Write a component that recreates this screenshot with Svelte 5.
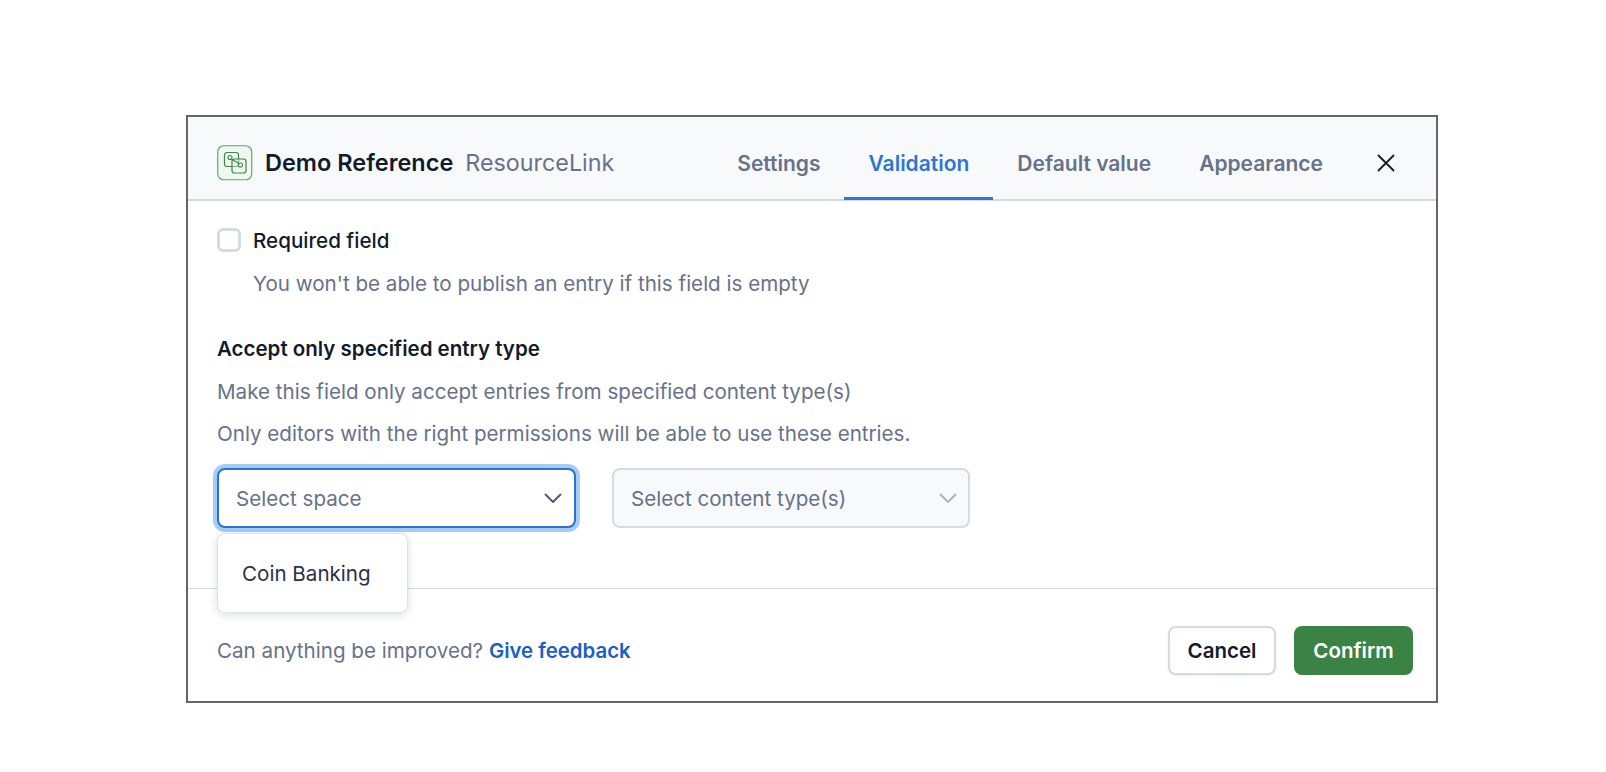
<script lang="ts">
  const tabs = ["Settings", "Validation", "Default value", "Appearance"];
  let active = $state("Validation");
</script>

<div class="page">
  <div class="modal">
    <header class="head">
      <div class="title">
        <svg class="field-icon" width="36" height="36" viewBox="0 0 36 36" fill="none">
          <rect x="0.75" y="0.75" width="34" height="34" rx="6" stroke="#5fa86e" stroke-width="1.2" fill="#f0f7f1" />
          <rect x="7.5" y="7.5" width="14" height="14" rx="2.5" stroke="#3d8748" stroke-width="1.2" />
          <rect x="15" y="14" width="14" height="14" rx="2.5" stroke="#3d8748" stroke-width="1.2" fill="#f0f7f1" fill-opacity="0.4" />
          <circle cx="13" cy="12.5" r="2" stroke="#3d8748" stroke-width="1.1" fill="#f7f9fa" />
          <circle cx="23.5" cy="20" r="2" stroke="#3d8748" stroke-width="1.1" fill="#f7f9fa" />
          <path d="M14.5 14l7.5 4.5" stroke="#3d8748" stroke-width="1.1" />
        </svg>
        <span class="name">Demo Reference</span>
        <span class="kind">ResourceLink</span>
      </div>
      <nav class="tabs">
        {#each tabs as tab (tab)}
          <button class="tab" class:active={tab === active} onclick={() => (active = tab)}>{tab}</button>
        {/each}
      </nav>
      <button class="close" aria-label="Close">
        <svg width="22" height="22" viewBox="0 0 22 22" fill="none">
          <path d="M3.5 3.5l15 15M18.5 3.5l-15 15" stroke="#111b2b" stroke-width="1.8" stroke-linecap="round" />
        </svg>
      </button>
    </header>

    <main class="body">
      <label class="check">
        <span class="box"></span>
        <span class="check-label">Required field</span>
      </label>
      <p class="hint indented">You won't be able to publish an entry if this field is empty</p>

      <h3 class="section">Accept only specified entry type</h3>
      <p class="hint first">Make this field only accept entries from specified content type(s)</p>
      <p class="hint second">Only editors with the right permissions will be able to use these entries.</p>

      <div class="selects">
        <div class="select-wrap">
          <div class="select focused">
            <span>Select space</span>
            <svg width="22" height="22" viewBox="0 0 22 22" fill="none">
              <path d="M3.5 7.5L11 15l7.5-7.5" stroke="#4f5a6e" stroke-width="1.9" stroke-linecap="round" stroke-linejoin="round" />
            </svg>
          </div>
          <div class="menu">Coin Banking</div>
        </div>
        <div class="select disabled">
          <span>Select content type(s)</span>
          <svg width="22" height="22" viewBox="0 0 22 22" fill="none">
            <path d="M3.5 7.5L11 15l7.5-7.5" stroke="#a9b2c0" stroke-width="1.9" stroke-linecap="round" stroke-linejoin="round" />
          </svg>
        </div>
      </div>
    </main>

    <footer class="foot">
      <p class="feedback">Can anything be improved? <a href="#feedback">Give feedback</a></p>
      <div class="actions">
        <button class="btn cancel">Cancel</button>
        <button class="btn confirm">Confirm</button>
      </div>
    </footer>
  </div>
</div>

<style>
  :global(body) {
    margin: 0;
    background: #fff;
    font-family: Inter, "Liberation Sans", sans-serif;
  }

  .page {
    padding: 115px 0 0 186px;
  }

  .modal {
    box-sizing: border-box;
    width: 1252px;
    height: 588px;
    border: 2px solid #666;
    background: #fff;
    display: flex;
    flex-direction: column;
  }

  .head {
    display: flex;
    align-items: stretch;
    height: 84px;
    box-sizing: border-box;
    background: #f7f9fa;
    border-bottom: 2px solid #d3dce0;
    padding-left: 29px;
  }

  .title {
    display: flex;
    align-items: center;
    flex: 1;
    padding-top: 9px;
  }

  .field-icon {
    margin-right: 12px;
  }

  .name {
    font-size: 23.5px;
    font-weight: 600;
    color: #111b2b;
  }

  .kind {
    font-size: 23.3px;
    color: #67728a;
    margin-left: 12px;
  }

  .tabs {
    display: flex;
    margin-right: 27px;
  }

  .tab {
    border: none;
    background: transparent;
    font-family: inherit;
    font-size: 21px;
    font-weight: 600;
    color: #67728a;
    padding: 12px 24px 0;
    border-bottom: 3px solid transparent;
    margin-bottom: -1px;
    cursor: pointer;
  }

  .tab.active {
    color: #2e75d4;
    border-bottom-color: #2e75d4;
  }

  .close {
    border: none;
    background: transparent;
    padding: 10px 0 0;
    margin-right: 38px;
    width: 24px;
    display: flex;
    align-items: center;
    justify-content: center;
    cursor: pointer;
  }

  .body {
    flex: 1;
    padding: 26px 29px 0;
    min-height: 0;
  }

  .check {
    display: flex;
    align-items: center;
    gap: 12px;
    height: 26px;
    font-size: 20.6px;
  }

  .box {
    box-sizing: border-box;
    width: 24px;
    height: 24px;
    border: 3px solid #d3dce3;
    border-radius: 6px;
    background: #fff;
  }

  .check-label {
    font-weight: 500;
    color: #111b2b;
  }

  .hint {
    margin: 0;
    font-size: 20.6px;
    line-height: 28px;
    color: #67728a;
  }

  .indented {
    margin: 17px 0 0 36px;
  }

  .section {
    margin: 37px 0 0;
    font-size: 20.5px;
    line-height: 28px;
    font-weight: 600;
    color: #111b2b;
  }

  .first {
    margin-top: 15px;
  }

  .second {
    margin-top: 14px;
  }

  .selects {
    display: flex;
    gap: 36px;
    margin-top: 20px;
  }

  .select-wrap {
    position: relative;
  }

  .select {
    box-sizing: border-box;
    width: 358px;
    height: 60px;
    display: flex;
    align-items: center;
    justify-content: space-between;
    padding: 0 9px 0 17px;
    border: 2px solid #d3dce3;
    border-radius: 8px;
    font-size: 20.6px;
    color: #67728a;
    background: #fff;
  }

  .select.focused {
    width: 359px;
    padding-right: 10px;
    border-color: #2e6fd0;
    box-shadow: 0 0 0 4px #a5ccf8;
  }

  .select.disabled {
    background: #f7f9fa;
  }

  .menu {
    position: absolute;
    top: 65px;
    left: 0;
    box-sizing: border-box;
    width: 191px;
    height: 80px;
    display: flex;
    align-items: center;
    padding-left: 24px;
    background: #fff;
    border: 1px solid #dfe3e7;
    border-radius: 8px;
    box-shadow: 0 2px 8px rgba(17, 27, 43, 0.14);
    font-size: 20.6px;
    color: #283248;
    z-index: 2;
  }

  .foot {
    display: flex;
    align-items: center;
    justify-content: space-between;
    height: 113px;
    box-sizing: border-box;
    border-top: 1px solid #d3dce0;
    padding: 10px 23px 0 29px;
  }

  .feedback {
    margin: 0;
    font-size: 20.6px;
    color: #67728a;
  }

  .feedback a {
    color: #1a5fc7;
    font-size: 20.4px;
    font-weight: 600;
    text-decoration: none;
  }

  .actions {
    display: flex;
    gap: 18px;
  }

  .btn {
    box-sizing: border-box;
    height: 49px;
    border-radius: 8px;
    font-family: inherit;
    font-size: 20.5px;
    font-weight: 600;
    cursor: pointer;
  }

  .cancel {
    width: 108px;
    background: #fff;
    color: #111b2b;
    border: 2px solid #d3dce0;
    box-shadow: 0 1px 2px rgba(17, 27, 43, 0.08);
  }

  .confirm {
    width: 119px;
    background: #3b8345;
    color: #fff;
    border: none;
  }
</style>
